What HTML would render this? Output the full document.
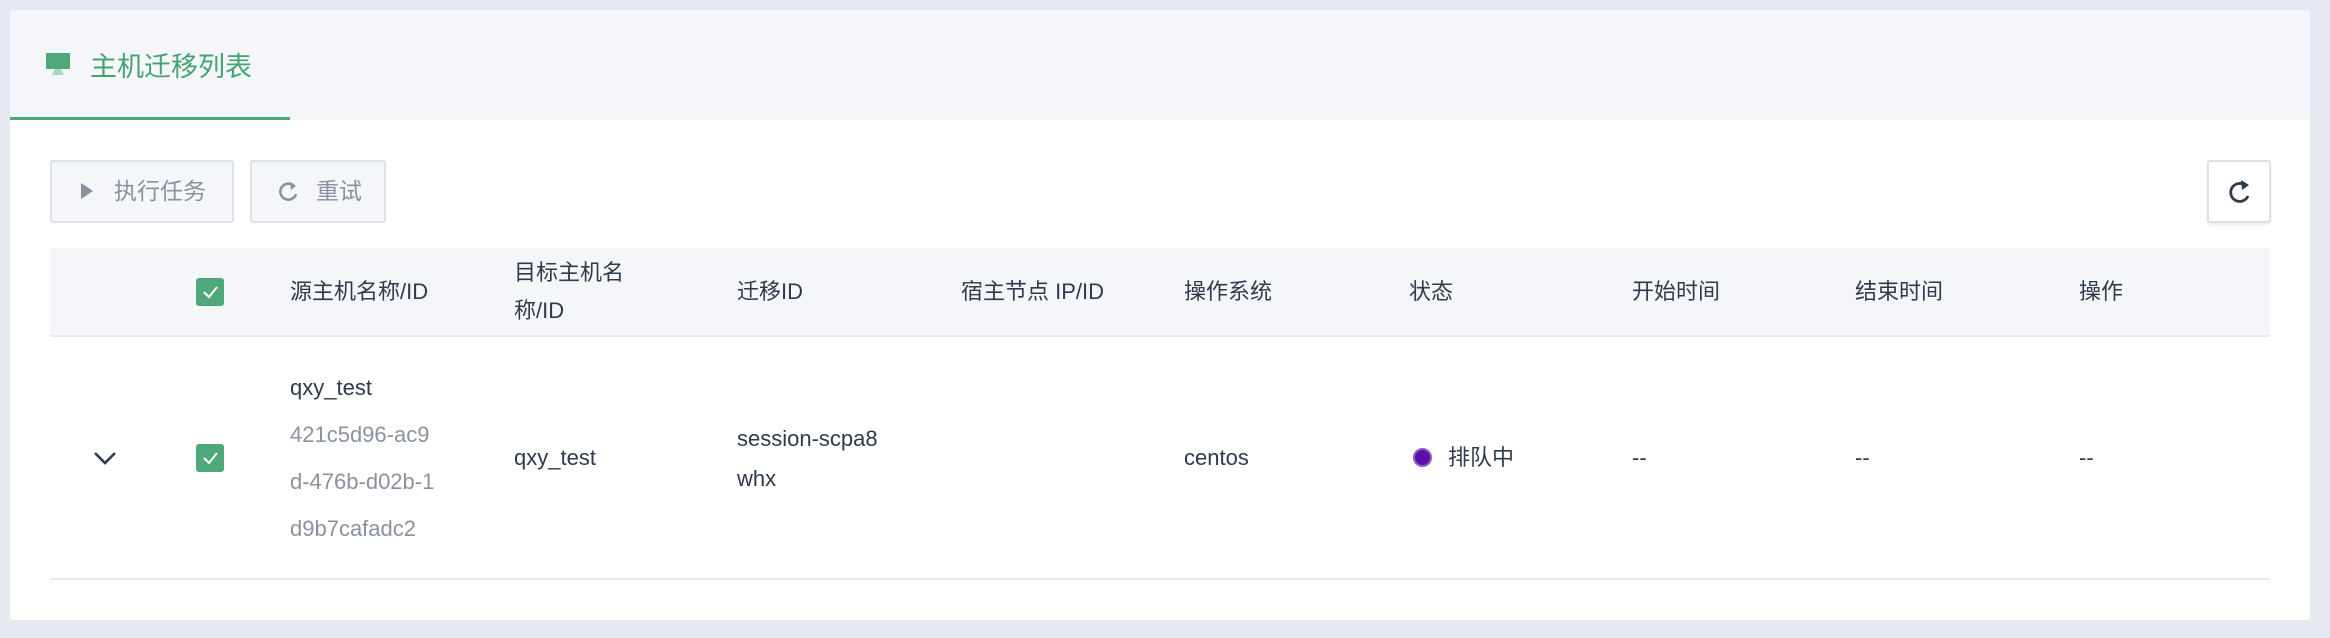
<!DOCTYPE html>
<html><head><meta charset="utf-8"><style>
*{margin:0;padding:0;box-sizing:border-box}
body{width:2330px;height:638px;background:#e6eaf0;font-family:"Liberation Sans","Noto Sans CJK SC",sans-serif;position:relative;overflow:hidden;color:#2f3a4a}
.panel{position:absolute;left:10px;top:10px;width:2300px;height:610px;background:#fff;border-radius:3px}
.hd{position:absolute;left:0;top:0;width:2300px;height:110px;background:#f5f6fa}
.ul{position:absolute;left:0;top:107px;width:280px;height:3px;background:#4fa87a}
.title{position:absolute;left:80px;top:40px;font-size:27px;color:#45a373;line-height:34px}
.abs{position:absolute;white-space:nowrap}
.btn{position:absolute;top:150px;height:63px;border:2px solid #dde2ea;background:#f5f6fa;border-radius:3px;font-size:23px;color:#8a929f;line-height:59px}
.th{position:absolute;left:40px;top:238px;width:2220px;height:89px;background:#f5f6fa;border-bottom:2px solid #e6eaf0}
.t{font-size:22px;line-height:38px}
.cb{position:absolute;width:28px;height:28px;background:#4fa87a;border-radius:3px}
.g{color:#8a929f}
</style></head><body>
<div class="panel">
 <div class="hd"></div><div class="ul"></div>
 <svg class="abs" style="left:36px;top:43px" width="24" height="23" viewBox="0 0 24 23"><rect x="0" y="0" width="24" height="16" fill="#4fa87a"/><path d="M9 16h6l3 6H6z" fill="#a8d8bd"/></svg>
 <div class="title">主机迁移列表</div>
 <div class="btn" style="left:40px;width:184px"><svg class="abs" style="left:28px;top:20px" width="14" height="18"><path d="M1 1L13 9L1 17Z" fill="#8a929f"/></svg><span class="abs" style="left:62px">执行任务</span></div>
 <div class="btn" style="left:240px;width:136px"><svg class="abs" style="left:26px;top:18px" width="22" height="24" viewBox="0 0 22 24"><path d="M16 6A8 8 0 1 0 18 14" fill="none" stroke="#8a929f" stroke-width="2.6"/><path d="M12 2l6 4-5 4z" fill="#8a929f"/></svg><span class="abs" style="left:64px">重试</span></div>
 <div class="btn" style="left:2197px;width:64px;background:#fff;box-shadow:0 2px 3px rgba(0,0,0,.08)"><svg class="abs" style="left:17px;top:15px" width="28" height="30" viewBox="0 0 28 30"><path d="M20 9A9 9 0 1 0 22 19" fill="none" stroke="#2f3a4a" stroke-width="2.8"/><path d="M15 3l8 5-7 5z" fill="#2f3a4a"/></svg></div>
 <div class="th"></div>
 <div class="cb" style="left:186px;top:268px"><svg width="28" height="28"><path d="M8 14l5 5 8-10" fill="none" stroke="#fff" stroke-width="2"/></svg></div>
 <div class="abs t" style="left:280px;top:263px">源主机名称/ID</div>
 <div class="abs t" style="left:504px;top:244px">目标主机名<br>称/ID</div>
 <div class="abs t" style="left:727px;top:263px">迁移ID</div>
 <div class="abs t" style="left:951px;top:263px">宿主节点 IP/ID</div>
 <div class="abs t" style="left:1174px;top:263px">操作系统</div>
 <div class="abs t" style="left:1399px;top:263px">状态</div>
 <div class="abs t" style="left:1622px;top:263px">开始时间</div>
 <div class="abs t" style="left:1845px;top:263px">结束时间</div>
 <div class="abs t" style="left:2069px;top:263px">操作</div>
 <svg class="abs" style="left:83px;top:441px" width="24" height="14"><path d="M2 2l10 10 10-10" fill="none" stroke="#2f3a4a" stroke-width="2.6"/></svg>
 <div class="cb" style="left:186px;top:434px"><svg width="28" height="28"><path d="M8 14l5 5 8-10" fill="none" stroke="#fff" stroke-width="2"/></svg></div>
 <div class="abs t" style="left:280px;top:354px;line-height:47px">qxy_test<br><span class="g">421c5d96-ac9<br>d-476b-d02b-1<br>d9b7cafadc2</span></div>
 <div class="abs t" style="left:504px;top:429px">qxy_test</div>
 <div class="abs t" style="left:727px;top:409px;line-height:40px">session-scpa8<br>whx</div>
 <div class="abs t" style="left:1174px;top:429px">centos</div>
 <div class="abs" style="left:1403px;top:438px;width:19px;height:19px;border-radius:50%;background:#5a0fa8;border:2px solid #8e5cc8"></div>
 <div class="abs t" style="left:1438px;top:429px">排队中</div>
 <div class="abs t" style="left:1622px;top:429px">--</div>
 <div class="abs t" style="left:1845px;top:429px">--</div>
 <div class="abs t" style="left:2069px;top:429px">--</div>
 <div class="abs" style="left:40px;top:568px;width:2220px;height:2px;background:#e6eaf0"></div>
</div>
</body></html>
